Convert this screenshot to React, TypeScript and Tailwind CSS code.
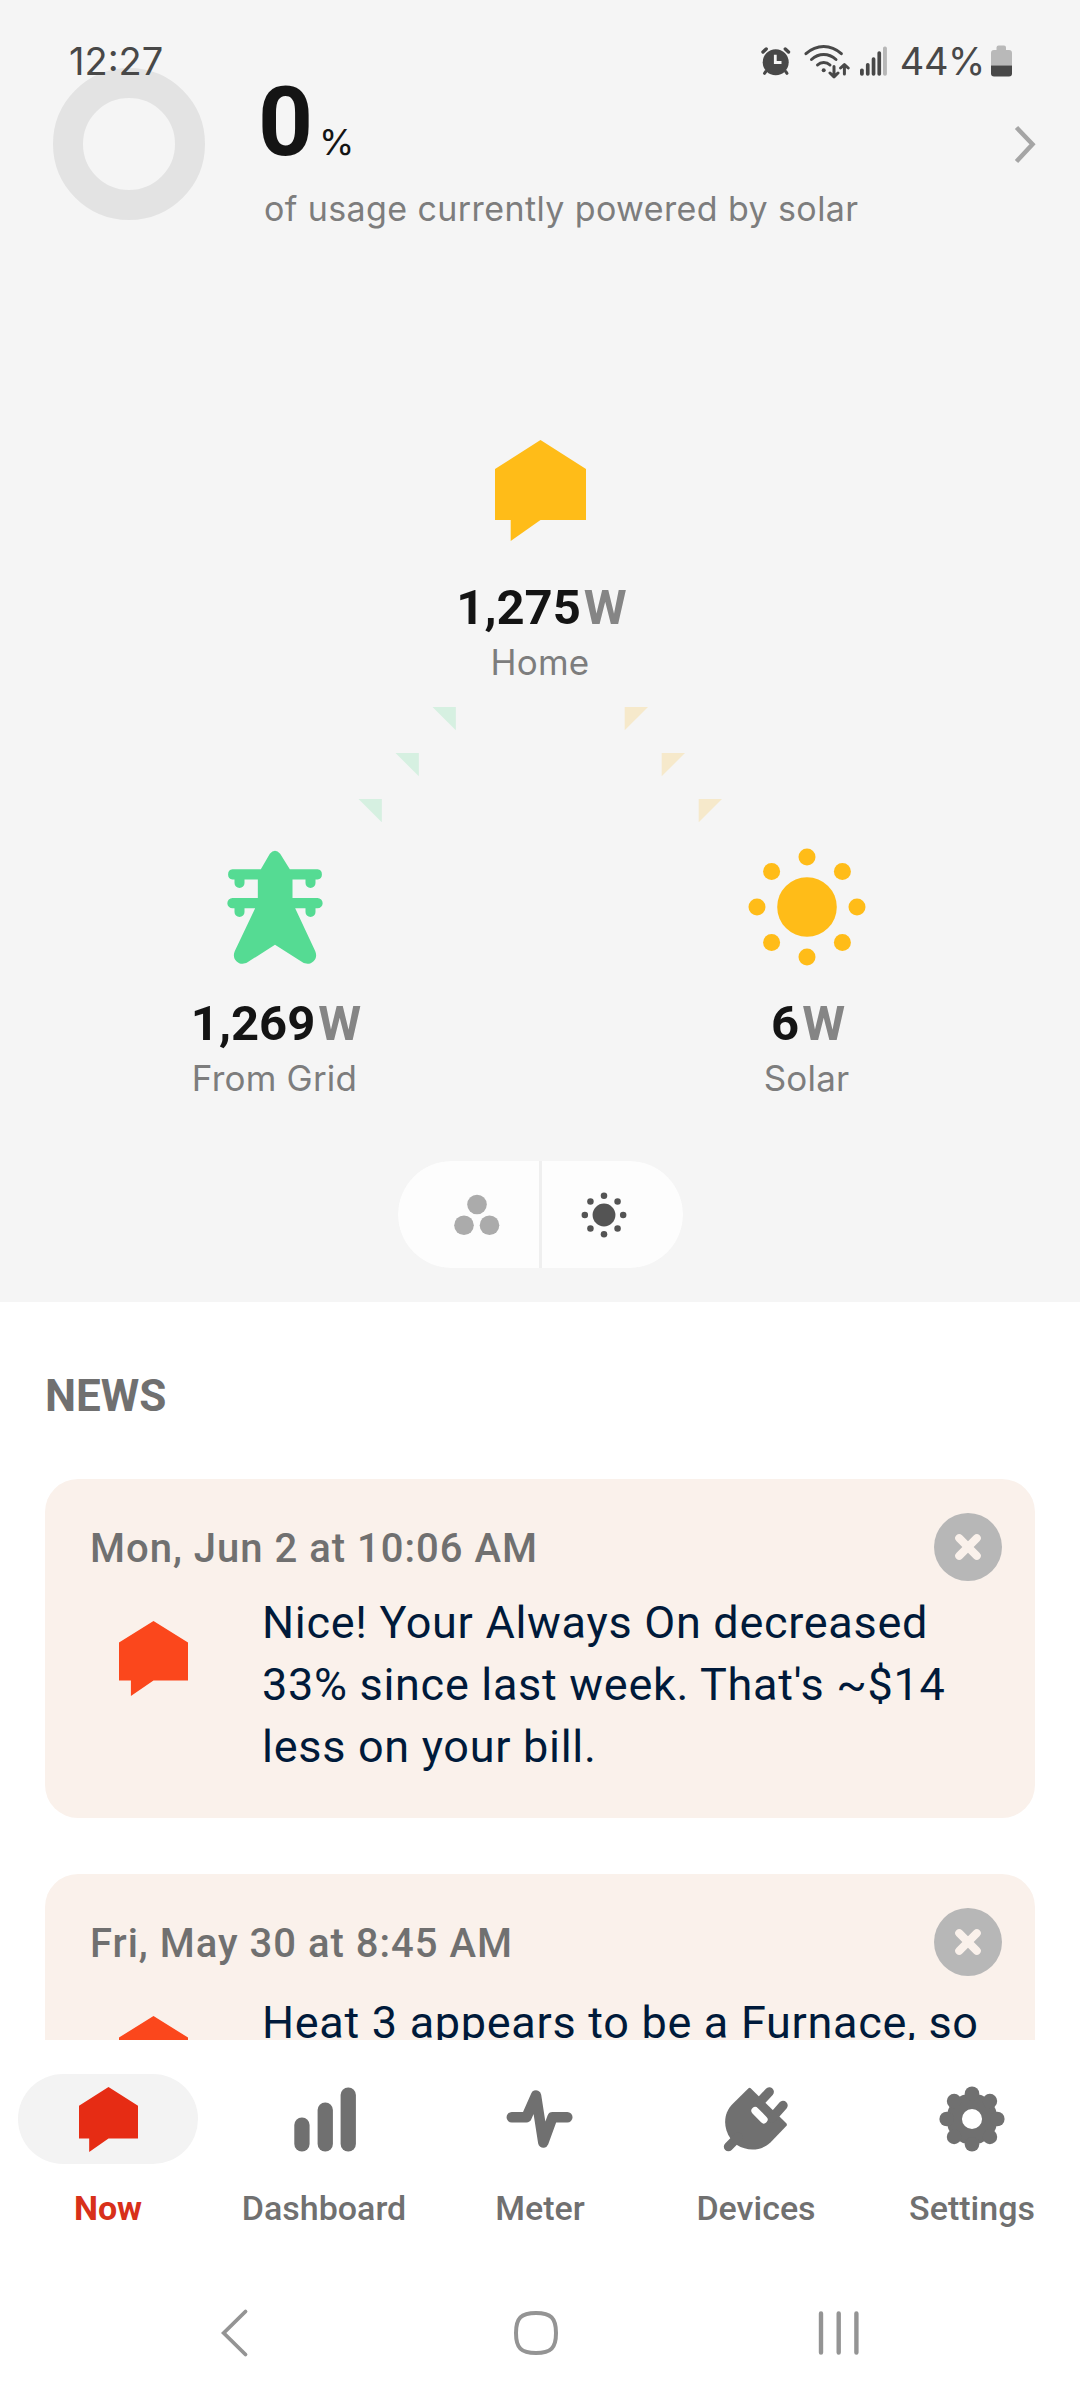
import React from 'react';

interface IconProps {
  className?: string;
}

interface NodeProps {
  icon: React.ReactNode;
  value: string;
  label: string;
}

interface NewsItem {
  date: string;
  text: string;
  textClass: string;
}

const news: NewsItem[] = [
  {
    date: 'Mon, Jun 2 at 10:06 AM',
    text: "Nice! Your Always On decreased 33% since last week. That's ~$14 less on your bill.",
    textClass: 'mt-[11px]',
  },
  {
    date: 'Fri, May 30 at 8:45 AM',
    text: 'Heat 3 appears to be a Furnace, so',
    textClass: 'mt-[16px]',
  },
];

function HouseIcon({ className }: IconProps) {
  return (
    <svg viewBox="0 0 91 101" preserveAspectRatio="none" className={className} fill="currentColor">
      <path d="M45.5 0 91 29V80H45.5L15.7 101V80H0V29Z" />
    </svg>
  );
}

function SunIcon({ className }: IconProps) {
  const dots = [
    [0, -50], [35.4, -35.4], [50, 0], [35.4, 35.4],
    [0, 50], [-35.4, 35.4], [-50, 0], [-35.4, -35.4],
  ];
  return (
    <svg viewBox="-60 -60 120 120" className={className} fill="currentColor">
      <circle r="29.8" />
      {dots.map(([x, y]) => (
        <circle key={`${x},${y}`} cx={x} cy={y} r="8.5" />
      ))}
    </svg>
  );
}

function TowerIcon() {
  return (
    <svg viewBox="163.5 81 360 360" className="h-[120px] w-[120px]" fill="#55db93">
      <path d="M328 101Q343.5 83 359 101L388 148H471A15.4 15.4 0 0 1 471 178.5H465V189A15 15 0 0 1 435 189V178.5H396V234H471A15.4 15.4 0 0 1 471 265H465V276A15 15 0 0 1 435 276V265H404L464 393C476 419 449 441 426 427L343.5 374L261 427C238 441 211 419 223 393L284 265H252V276A15 15 0 0 1 222 276V265H216A15.4 15.4 0 0 1 216 234H292V178.5H252V189A15 15 0 0 1 222 189V178.5H216A15.4 15.4 0 0 1 216 148H301Z" />
    </svg>
  );
}

function AlarmIcon() {
  return (
    <svg viewBox="0 0 30 30" className="h-[30px] w-[30px]" fill="none" stroke="#484848" strokeLinecap="round">
      <circle cx="14.7" cy="16.3" r="13" fill="#484848" stroke="none" />
      <path d="M2 6 5.2 3M27.5 6 24.3 3" strokeWidth="3.4" />
      <path d="M4.8 25.5 3.5 27.3M24.7 25.5 26 27.3" strokeWidth="3" />
      <path d="M14.3 8.8V16.5H20.5" stroke="#f5f5f5" strokeWidth="2.8" strokeLinecap="butt" />
    </svg>
  );
}

function WifiIcon() {
  return (
    <svg viewBox="804 44 46 35" className="h-[35px] w-[46px]" fill="none" stroke="#484848" strokeWidth="3" strokeLinecap="round" strokeLinejoin="round">
      <path d="M806 53.7Q814 46.5 823.7 46.5T841.3 53.7" />
      <path d="M811.5 59.5Q817 54.5 823.7 54.5T836 59.5" />
      <path d="M817.5 65Q820 62.5 823.7 62.5T830 65" />
      <circle cx="823.7" cy="70.3" r="2" fill="#484848" stroke="none" />
      <path d="M834 66.5V76M830 73 834 76.8 838 73M844.4 74V65M840.6 68 844.4 64.5 848.2 68" />
    </svg>
  );
}

function SignalIcon() {
  return (
    <svg viewBox="0 0 28 30" className="h-[30px] w-[28px]" fill="#484848">
      <rect x="0" y="22.5" width="3.8" height="7.2" rx="1.8" />
      <rect x="5.9" y="17" width="3.7" height="12.7" rx="1.8" />
      <rect x="11.7" y="11.3" width="3.7" height="18.4" rx="1.8" />
      <rect x="17.4" y="5.3" width="3.7" height="24.4" rx="1.8" />
      <rect x="23" y="0.4" width="3.9" height="29.3" rx="1.8" fill="#b7b7b7" />
    </svg>
  );
}

function BatteryIcon() {
  return (
    <svg viewBox="0 0 21 32" className="h-[32px] w-[21px]">
      <path d="M5.5 5V2.5Q5.5 0.4 7.6 0.4H13Q15 0.4 15 2.5V5H18Q21 5 21 8V20.8H0V8Q0 5 3 5Z" fill="#b9b9b9" />
      <path d="M0 20.5H21V28.3Q21 31.5 18 31.5H3Q0 31.5 0 28.3Z" fill="#484848" />
    </svg>
  );
}

function StatusBar() {
  return (
    <div className="absolute inset-x-0 top-0 flex h-[122px] items-center justify-between pr-[68px] pl-[69px] text-[38px] leading-none text-[#484848]">
      <span>12:27</span>
      <div className="flex items-center">
        <AlarmIcon />
        <span className="ml-[13px]"><WifiIcon /></span>
        <span className="ml-[10px]"><SignalIcon /></span>
        <span className="ml-[12px] tracking-[-0.4px]">44%</span>
        <span className="ml-[6px]"><BatteryIcon /></span>
      </div>
    </div>
  );
}

function PowerNode({ icon, value, label }: NodeProps) {
  return (
    <div className="flex w-[267px] flex-col items-center">
      {icon}
      <div className="mt-[29px] flex gap-[3px] pl-[3px] font-[Roboto,sans-serif] text-[49px] leading-[56px] font-bold text-[#141414]">
        <span>{value}</span>
        <span className="text-[#858585]">W</span>
      </div>
      <div className="mt-1 text-[35px] leading-[44px] tracking-[0.2px] text-[#7d7d7d]">{label}</div>
    </div>
  );
}

function FlowArrows() {
  return (
    <svg viewBox="0 0 364 115" className="mt-[23px] h-[115px] w-[364px]">
      <g fill="#d6f0e1">
        <path d="M74.5 0H97.8V23.3Z" />
        <path d="M37.5 46H60.8V69.3Z" />
        <path d="M0.5 92H23.8V115.3Z" />
      </g>
      <g fill="#f6e9cb">
        <path d="M266.7 0H290L266.7 23.3Z" />
        <path d="M303.7 46H327L303.7 69.3Z" />
        <path d="M340.7 92H364L340.7 115.3Z" />
      </g>
    </svg>
  );
}

function SolarSection() {
  return (
    <section className="relative flex h-[1302px] shrink-0 flex-col items-center bg-[#f5f5f5]">
      <header className="flex h-[220px] w-full items-start">
        <svg viewBox="0 0 152 152" className="mt-[68px] ml-[53px] h-[152px] w-[152px]">
          <circle cx="76" cy="76" r="61" fill="none" stroke="#e3e3e3" strokeWidth="30" />
        </svg>
        <div className="mt-[82px] ml-[53px]">
          <div className="flex h-[80px] items-baseline gap-[6px] text-[#141414]">
            <span className="font-[Roboto,sans-serif] text-[96px] leading-[80px] font-bold">0</span>
            <span className="text-[36px] leading-10">%</span>
          </div>
          <p className="mt-[25px] pl-[6px] text-[34px] leading-[44px] tracking-[0.4px] text-[#7d7d7d]">
            of usage currently powered by solar
          </p>
        </div>
        <svg viewBox="0 0 24 42" className="mt-[123px] mr-[43px] ml-auto h-[42px] w-6" fill="none" stroke="#a5a5a5" strokeWidth="4.5">
          <path d="M3.5 4.5 19.5 21.3 3.5 38.5" />
        </svg>
      </header>

      {/* Home on top, fed by the grid and the panels below */}
      <div className="mt-[220px] flex flex-col items-center">
        <HouseIcon className="h-[101px] w-[91px] text-[#ffbc18]" />
        <div className="mt-[10px]">
          <PowerNode icon={null} value="1,275" label="Home" />
        </div>
      </div>
      <FlowArrows />
      <div className="mt-[25px] flex w-full justify-between pr-[140px] pl-[141px]">
        <PowerNode icon={<TowerIcon />} value="1,269" label="From Grid" />
        <PowerNode icon={<SunIcon className="h-[120px] w-[120px] text-[#ffbc18]" />} value="6" label="Solar" />
      </div>

      <div className="mt-[61px] flex h-[107px] w-[285px] gap-[3px] overflow-hidden rounded-full bg-[#efefef]">
        <button className="w-[141px] bg-[#fdfdfd] pl-[56px]">
          <svg viewBox="0 0 46 42" className="h-[42px] w-[46px]" fill="#ababab">
            <circle cx="23" cy="10.5" r="9.8" />
            <circle cx="10" cy="31.3" r="9.8" />
            <circle cx="35.5" cy="31.3" r="9.8" />
          </svg>
        </button>
        <button className="w-[141px] bg-[#fdfdfd] pl-[39px]">
          <SunIcon className="h-[46px] w-[46px] text-[#545454]" />
        </button>
      </div>
      <StatusBar />
    </section>
  );
}

function NewsCard({ date, text, textClass }: NewsItem) {
  return (
    <article className="min-h-[339px] rounded-[33px] bg-[#faf1eb] pt-[34px] font-[Roboto,sans-serif]">
      <div className="flex h-[68px] items-center justify-between pr-[33px] pl-[45px]">
        <time className="pt-[4px] text-[40px] leading-[48px] font-medium tracking-[1px] text-[#707070]">{date}</time>
        <button>
          <svg viewBox="0 0 68 68" className="h-[68px] w-[68px]">
            <circle cx="34" cy="34" r="34" fill="#b7b7b7" />
            <path d="M25.2 25.2 42.8 42.8M42.8 25.2 25.2 42.8" stroke="#faf1eb" strokeWidth="8" strokeLinecap="round" />
          </svg>
        </button>
      </div>
      <div className="flex">
        <HouseIcon className="mt-10 ml-[74px] h-[75px] w-[69px] shrink-0 text-[#fb471c]" />
        <p className={`ml-[74px] w-[740px] text-[45px] leading-[62px] tracking-[0.7px] text-[#001a3a] ${textClass}`}>{text}</p>
      </div>
    </article>
  );
}

function BarsIcon() {
  return (
    <svg viewBox="0 1 68 68" className="h-[68px] w-[68px]" fill="#707070">
      <rect x="4.3" y="33.5" width="15.3" height="34" rx="7.5" />
      <rect x="27.6" y="18.5" width="15.3" height="49" rx="7.5" />
      <rect x="50.6" y="3.5" width="15.3" height="64" rx="7.5" />
    </svg>
  );
}

function PulseIcon() {
  return (
    <svg viewBox="0 1 68 68" className="h-[68px] w-[68px]" fill="none" stroke="#707070" strokeWidth="10.5" strokeLinecap="round" strokeLinejoin="round">
      <path d="M5.8 33.2H20.5L30 11.5 37.3 58.5 46.5 33.2H61.3" />
    </svg>
  );
}

function PlugIcon() {
  return (
    <svg viewBox="0 1 68 68" className="h-[68px] w-[68px]" fill="#707070">
      <path d="M28.7 4.3 64.3 39.3Q65.5 40.7 64.3 42L48.7 58.3C39 67.5 25 67.3 15 61L8.5 54.5C1 43.5 1 29.5 10.8 19.8L26.5 4.3Q27.6 3.3 28.7 4.3Z" />
      <path d="M36 20 47.3 7.8M50 34 61.1 21.4M6.4 62.7 16 53" stroke="#707070" strokeWidth="9.2" strokeLinecap="round" />
      <path d="M33.2 26.8 41.8 35.6" stroke="#fff" strokeWidth="7.6" strokeLinecap="round" />
    </svg>
  );
}

function GearIcon() {
  const angles = [0, 45, 90, 135, 180, 225, 270, 315];
  return (
    <svg viewBox="-34 -34 68 68" className="h-[68px] w-[68px]" fill="#707070">
      <circle r="17.8" fill="none" stroke="#707070" strokeWidth="15.5" />
      {angles.map((a) => (
        <circle key={a} cx="25.3" cy="0" r="7.3" transform={`rotate(${a})`} />
      ))}
    </svg>
  );
}

const tabs = [
  { label: 'Now', icon: <HouseIcon className="mt-px h-[65px] w-[59px] text-[#e62c14]" />, active: true },
  { label: 'Dashboard', icon: <BarsIcon /> },
  { label: 'Meter', icon: <PulseIcon /> },
  { label: 'Devices', icon: <PlugIcon /> },
  { label: 'Settings', icon: <GearIcon /> },
];

function TabBar() {
  return (
    <nav className="flex h-[226px] shrink-0 bg-white pt-[34px] font-[Roboto,sans-serif]">
      {tabs.map(({ label, icon, active }) => (
        <button key={label} className="flex w-[216px] flex-col items-center">
          <span className={`flex h-[90px] w-[180px] items-center justify-center rounded-full ${active ? 'bg-[#f3f3f3]' : ''}`}>
            {icon}
          </span>
          <span className={`mt-6 text-[34px] leading-10 ${active ? 'font-bold text-[#d8301a]' : 'font-medium text-[#707070]'}`}>
            {label}
          </span>
        </button>
      ))}
    </nav>
  );
}

function SystemBar() {
  return (
    <div className="flex h-[134px] shrink-0 items-center gap-[242px] bg-white pl-[205px]">
      <svg viewBox="0 0 60 60" className="h-[60px] w-[60px]" fill="none" stroke="#949494" strokeWidth="3.8" strokeLinecap="round">
        <path d="M40.5 8.5 18.7 30 40.5 51.5" />
      </svg>
      <svg viewBox="0 0 60 60" className="h-[60px] w-[60px]" fill="none" stroke="#949494" strokeWidth="4">
        <path d="M29 10C44 10 49 15 49 30S44 50 29 50 9 45 9 30 14 10 29 10Z" />
      </svg>
      <svg viewBox="0 0 60 60" className="h-[60px] w-[60px]" fill="none" stroke="#949494" strokeWidth="4.4" strokeLinecap="round">
        <path d="M12 10.5V49.5M29.7 10.5V49.5M47.4 10.5V49.5" />
      </svg>
    </div>
  );
}

export default function App() {
  return (
    <div className="flex h-[2400px] w-[1080px] flex-col overflow-hidden bg-white font-[Inter,sans-serif]">
      <SolarSection />
      <section className="h-[738px] shrink-0 overflow-hidden px-[45px] pt-[68px]">
        <h2 className="mb-[57px] font-[Roboto,sans-serif] text-[44px] leading-[52px] font-bold text-[#707070]">NEWS</h2>
        <div className="flex flex-col gap-14">
          {news.map((item) => (
            <NewsCard key={item.date} {...item} />
          ))}
        </div>
      </section>
      <TabBar />
      <SystemBar />
    </div>
  );
}
